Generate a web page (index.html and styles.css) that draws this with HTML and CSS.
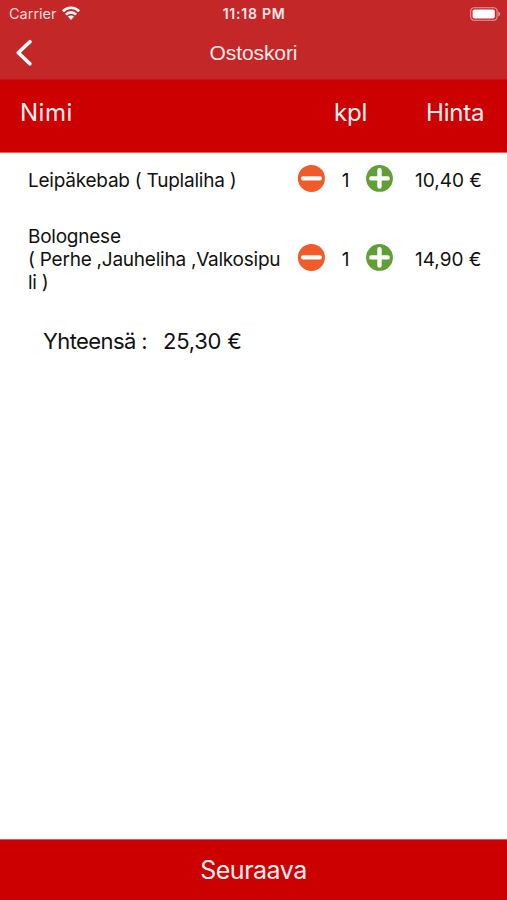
FILE: index.html
```html
<!DOCTYPE html>
<html lang="fi">
<head>
<meta charset="utf-8">
<title>Ostoskori</title>
<link rel="stylesheet" href="styles.css">
</head>
<body>
<svg width="0" height="0" class="symbols">
  <symbol id="minus" viewBox="0 0 28 28"><circle cx="14.4" cy="14.4" r="13.5" fill="#f15a29"/><path d="M6 14.4h16.8" stroke="#fff" stroke-width="4.2" stroke-linecap="round"/></symbol>
  <symbol id="plus" viewBox="0 0 28 28"><circle cx="14.5" cy="14.4" r="13.4" fill="#5f9f35"/><path d="M6.3 14.4h16.4M14.5 6.2v16.4" stroke="#fff" stroke-width="4.4" stroke-linecap="round"/></symbol>
</svg>
<div class="app">
  <header class="top">
    <div class="status">
      <div class="carrier"><span class="carrier-name">Carrier</span>
        <svg class="wifi" width="18" height="14" viewBox="0 0 18 14"><g fill="none" stroke="#fff" stroke-width="2.7"><path d="M.9 5.2C5.4.6 12.6.6 17.1 5.2"/><path d="M3.9 8.6C6.8 5.7 11.2 5.7 14.1 8.6"/></g><path d="M5.9 10.6c1.8-1.6 4.4-1.6 6.2 0L9 13.9z" fill="#fff"/></svg>
      </div>
      <span class="time">11:18 PM</span>
      <svg class="battery" width="31" height="14" viewBox="0 0 31 14"><rect x=".7" y=".7" width="26.4" height="12.6" rx="3.6" fill="none" stroke="#e59a9a" stroke-width="1.1"/><rect x="2.6" y="2.4" width="22.2" height="9.2" rx="1.8" fill="#fff"/><path d="M28.3 4.6c2.4.8 2.4 4 0 4.8z" fill="#e59a9a"/></svg>
    </div>
    <div class="nav">
      <svg class="back" width="18" height="28" viewBox="0 0 18 28"><path d="M15.9 2.7 4.3 13.8l11.6 11" fill="none" stroke="#fff" stroke-width="3.6" stroke-linecap="round" stroke-linejoin="round"/></svg>
      <h1 class="title">Ostoskori</h1>
    </div>
  </header>
  <div class="head"><span class="head-name">Nimi</span><span class="head-qty">kpl</span><span class="head-price">Hinta</span></div>
  <main class="cart">
    <div class="item">
      <div class="name">Leipäkebab ( Tuplaliha )</div>
      <svg class="btn"><use href="#minus"/></svg><span class="qty">1</span><svg class="btn"><use href="#plus"/></svg>
      <span class="price">10,40 €</span>
    </div>
    <div class="item item-tall">
      <div class="name">Bolognese<br>( Perhe ,Jauheliha ,Valkosipu<br>li )</div>
      <svg class="btn"><use href="#minus"/></svg><span class="qty">1</span><svg class="btn"><use href="#plus"/></svg>
      <span class="price">14,90 €</span>
    </div>
    <div class="total"><span class="total-label">Yhteensä :</span><span class="total-sum">25,30 €</span></div>
  </main>
  <footer class="next">Seuraava</footer>
</div>
</body>
</html>
```
FILE: styles.css
```css
* { box-sizing: border-box; }
body { margin: 0; font-family: Inter, "Liberation Sans", sans-serif; color: #111; background: #fff; }
.symbols { position: absolute; }
.app { width: 507px; height: 900px; display: flex; flex-direction: column; overflow: hidden; white-space: nowrap; }
.top { height: 80px; background: #c42727; color: #fff; border-bottom: 1px solid #c91414; }
.status { height: 27px; display: grid; grid-template-columns: 1fr auto 1fr; align-items: center; padding: 0 6px 0 9px; }
.carrier { display: flex; align-items: center; gap: 5px; }
.carrier-name { font-size: 14.5px; color: #fbdcdc; }
.wifi { margin-top: -2px; }
.time { font-size: 14px; font-weight: 600; letter-spacing: .75px; color: #ffe9e9; margin-left: -2px; }
.battery { justify-self: end; }
.nav { height: 52px; display: grid; grid-template-columns: 60px 1fr 60px; align-items: center; }
.back { margin: -1px 0 0 14px; }
.title { margin: 0; text-align: center; font: 400 21px "Liberation Sans", sans-serif; letter-spacing: -.1px; color: #ffe9e9; }
.head { height: 73px; background: #c00; color: #fff0f0; font-size: 24px; line-height: 66px; display: grid; grid-template-columns: 334px 92px 1fr; border-bottom: 1px solid #e56060; }
.head-name { padding-left: 20px; letter-spacing: .5px; }
.head-price, .head-qty { letter-spacing: -.2px; }
.cart { flex: 1; }
.item { height: 56px; display: grid; grid-template-columns: 270px 28px 40px 28px 1fr; align-items: center; padding: 0 0 1px 28px; font-size: 19px; line-height: 23px; }
.item-tall { height: 102px; }
.name { letter-spacing: -.24px; }
.btn { width: 28px; height: 28px; margin: -6px 0 0 -1px; overflow: visible; }
.qty { text-align: center; padding-right: 1px; }
.price { padding-left: 21px; }
.total { display: flex; gap: 16px; padding: 16px 0 0 43px; font-size: 22px; line-height: 28px; }
.total-label { letter-spacing: -.6px; }
.total-sum { letter-spacing: -.25px; }
.next { height: 61px; background: #c00; color: #fff0f0; font-size: 25px; letter-spacing: -.5px; line-height: 61px; text-align: center; border-top: 1px solid #d55; }
```
